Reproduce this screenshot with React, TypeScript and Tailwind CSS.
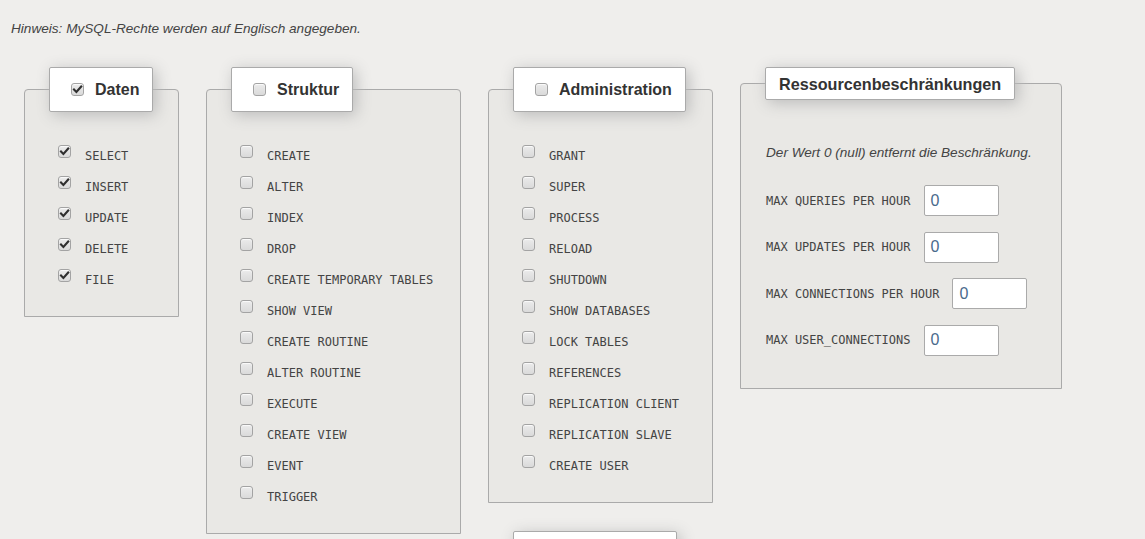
import React from "react";

const sans = { fontFamily: '"Liberation Sans", Arial, sans-serif' };
const mono = { fontFamily: '"DejaVu Sans Mono", "Liberation Mono", monospace' };

function Box({ checked }: { checked?: boolean }) {
  return (
    <span className="inline-flex h-[13px] w-[13px] shrink-0 items-center justify-center rounded-[3px] border border-[#a3a3a3] bg-gradient-to-b from-[#ebebeb] to-[#dadada] shadow-[inset_0_1px_1px_rgba(255,255,255,0.8)]">
      {checked && (
        <svg width="11" height="11" viewBox="0 0 11 11">
          <path d="M2 5.6 L4.4 8 L9.2 2.6" fill="none" stroke="#2f2f2f" strokeWidth="2.1" strokeLinecap="square" />
        </svg>
      )}
    </span>
  );
}

function Legend({ label, checkbox, checked, offset }: { label: string; checkbox?: boolean; checked?: boolean; offset: string }) {
  return (
    <legend className={`${offset} rounded-[2px] border border-[#aaa] bg-white shadow-[3px_3px_15px_#bbb]`}>
      {checkbox ? (
        <div className="flex h-[43px] items-center pl-[21px] pr-[13px]">
          <Box checked={checked} />
          <span className="ml-[11px] text-[16px] font-bold leading-[20px] text-[#333]">{label}</span>
        </div>
      ) : (
        <div className="flex h-[31px] items-center px-[13px]">
          <span className="text-[16.2px] font-bold leading-[20px] text-[#333]">{label}</span>
        </div>
      )}
    </legend>
  );
}

function PrivFieldset({ title, items, checked, width }: { title: string; items: string[]; checked: boolean; width: string }) {
  return (
    <fieldset className={`${width} min-w-0 shrink-0 rounded-t-[4px] border border-[#aaa] bg-[#e9e8e5] pb-[21px] pl-[33px] pt-[28px]`}>
      <Legend label={title} checkbox checked={checked} offset="ml-[-9px]" />
      {items.map((it) => (
        <div key={it} className="flex h-[31px] items-center">
          <span className="mb-[9px] flex">
            <Box checked={checked} />
          </span>
          <span className="ml-[14px] whitespace-nowrap text-[12px] leading-[16px] text-[#444]" style={mono}>
            {it}
          </span>
        </div>
      ))}
    </fieldset>
  );
}

const daten = ["SELECT", "INSERT", "UPDATE", "DELETE", "FILE"];
const struktur = [
  "CREATE",
  "ALTER",
  "INDEX",
  "DROP",
  "CREATE TEMPORARY TABLES",
  "SHOW VIEW",
  "CREATE ROUTINE",
  "ALTER ROUTINE",
  "EXECUTE",
  "CREATE VIEW",
  "EVENT",
  "TRIGGER",
];
const admin = [
  "GRANT",
  "SUPER",
  "PROCESS",
  "RELOAD",
  "SHUTDOWN",
  "SHOW DATABASES",
  "LOCK TABLES",
  "REFERENCES",
  "REPLICATION CLIENT",
  "REPLICATION SLAVE",
  "CREATE USER",
];
const limits = ["MAX QUERIES PER HOUR", "MAX UPDATES PER HOUR", "MAX CONNECTIONS PER HOUR", "MAX USER_CONNECTIONS"];

export default function App() {
  return (
    <div className="h-[539px] w-full overflow-hidden bg-[#efeeec]" style={sans}>
      <p className="pl-[11px] pt-[21px] text-[13.6px] italic leading-[16px] text-[#444]">
        Hinweis: MySQL-Rechte werden auf Englisch angegeben.
      </p>
      <div className="mt-[30px] flex items-start gap-[27px] pl-[24px]">
        <PrivFieldset title="Daten" items={daten} checked width="w-[155px]" />
        <PrivFieldset title="Struktur" items={struktur} checked={false} width="w-[255px]" />
        <div className="flex shrink-0 flex-col gap-[28px]">
          <PrivFieldset title="Administration" items={admin} checked={false} width="w-[225px]" />
          <fieldset className="w-[225px] min-w-0 rounded-t-[4px] border border-[#aaa] bg-[#e9e8e5] pb-[21px] pl-[33px] pt-[28px]">
            <legend className="ml-[-9px] h-[45px] w-[164px] rounded-[2px] border border-[#aaa] bg-white shadow-[3px_3px_15px_#bbb]" />
            <div className="h-[60px]" />
          </fieldset>
        </div>
        <fieldset className="w-[322px] min-w-0 shrink-0 rounded-t-[4px] border border-[#aaa] bg-[#e9e8e5] pb-[32px] pl-[25px] pt-[45px]">
          <Legend label="Ressourcenbeschränkungen" offset="ml-[-1px]" />
          <p className="whitespace-nowrap text-[13.6px] italic leading-[16px] text-[#444]">
            Der Wert 0 (null) entfernt die Beschränkung.
          </p>
          <div className="mt-[24px] flex flex-col gap-[15.5px]">
            {limits.map((l) => (
              <div key={l} className="flex h-[31px] items-center">
                <span className="whitespace-nowrap text-[12px] leading-[16px] text-[#444]" style={mono}>
                  {l}
                </span>
                <div className="ml-[13px] flex h-[31px] w-[75px] items-center rounded-[2px] border border-[#aaa] bg-white pl-[6px] text-[16px] text-[#4a6a8c]">
                  0
                </div>
              </div>
            ))}
          </div>
        </fieldset>
      </div>
    </div>
  );
}
